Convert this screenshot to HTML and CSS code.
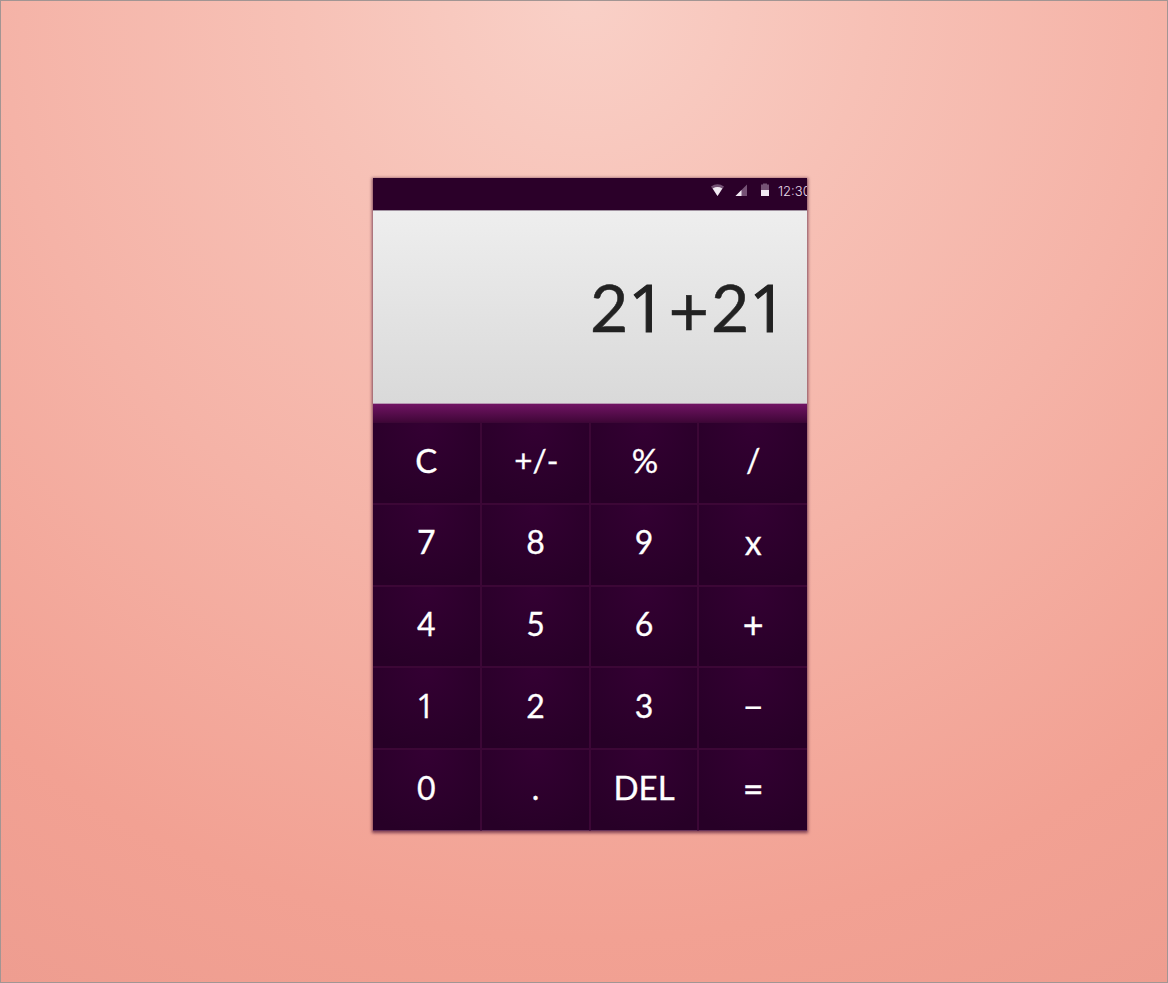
FILE: index.html
```html
<!DOCTYPE html>
<html lang="en">
<head>
<meta charset="utf-8">
<title>Calculator</title>
<link rel="stylesheet" href="styles.css">
</head>
<body>
<main class="calculator">
  <header class="status">
    <svg class="status-icons" width="62" height="16" viewBox="0 0 62 16">
      <path class="dim" d="M0 3.500Q6.500-1 13 3.500L6.500 13Z"/>
      <path class="lit" d="M1.700 5.500Q6.500 2.700 11.300 5.500L6.500 13Z"/>
      <path class="dim" d="M36 1.500V13H24.500Z"/>
      <path class="lit" d="M30.500 7V13H24.500Z"/>
      <path class="dim" d="M52 .500H56V1.500H58V7H50V1.500H52Z"/>
      <path class="lit" d="M50 7H58V13H50Z"/>
    </svg>
    <span class="clock">12:30</span>
  </header>
  <section class="display"><span class="expression">2<span class="one">1</span><span class="plus">+</span>2<span class="one">1</span></span></section>
  <div class="band"></div>
  <section class="keypad">
    <button class="key key-wide">C</button>
    <button class="key key-sign">+/-</button>
    <button class="key key-percent">%</button>
    <button class="key">/</button>
    <button class="key">7</button>
    <button class="key">8</button>
    <button class="key">9</button>
    <button class="key key-times">x</button>
    <button class="key">4</button>
    <button class="key">5</button>
    <button class="key">6</button>
    <button class="key key-op">+</button>
    <button class="key"><span class="one">1</span></button>
    <button class="key">2</button>
    <button class="key">3</button>
    <button class="key key-op key-minus">−</button>
    <button class="key">0</button>
    <button class="key">.</button>
    <button class="key key-del">DEL</button>
    <button class="key key-op">=</button>
  </section>
</main>
</body>
</html>
```
FILE: styles.css
```css
* { box-sizing: border-box; }

body {
  margin: 0;
  width: 1168px;
  height: 983px;
  padding: 177px 0 0 371.5px;
  border: 1px solid #a29593;
  overflow: hidden;
  font-family: Lato, sans-serif;
  background: radial-gradient(circle 1143px at 50% 0, #f9d0c7 0, #f7c1b6 25%, #f5b3a7 51%, #f2a193 82%, #ee9d90 100%);
}

.calculator {
  width: 434.5px;
  height: 653px;
  display: flex;
  flex-direction: column;
  box-shadow: 0 1px 3px 1px rgba(65, 10, 45, .65);
}

.status {
  height: 32px;
  flex: none;
  display: flex;
  padding: 5px 0 0 338.5px;
  background: #2b0029;
  overflow: hidden;
}

.status-icons { flex: none; }
.dim { fill: #755275; }
.lit { fill: #f2e9f3; }

.clock {
  flex: none;
  margin-left: 5px;
  font: 300 13px/17px Inter, sans-serif;
  color: #e9dcea;
}

.display {
  height: 194px;
  flex: none;
  display: flex;
  align-items: center;
  justify-content: flex-end;
  padding: 0 15.5px 1px 0;
  border-top: 1px solid #a193a1;
  border-bottom: 1px solid #b697b2;
  background: linear-gradient(#eeeeee, #d9d9d9);
}

.expression {
  font-size: 66px;
  line-height: 80px;
  letter-spacing: 2px;
  color: #222;
  -webkit-text-stroke: .5px #222;
}

.one { font-family: "Open Sans", sans-serif; }

.expression .one {
  margin: 0 2px 0 -2px;
  letter-spacing: 2.6px;
  line-height: 1;
  -webkit-text-stroke-width: 1.1px;
}

.plus {
  position: relative;
  top: 4px;
  margin: 0 2px 0 -2px;
  font-size: 70px;
  line-height: 1;
  letter-spacing: -.3px;
}

.band {
  height: 18px;
  flex: none;
  background: linear-gradient(#701463, #400638);
}

.keypad {
  flex: 1;
  display: grid;
  grid-template-columns: repeat(4, 1fr);
  grid-template-rows: repeat(5, 1fr);
}

.key {
  margin: 0;
  padding: 0 0 5px;
  border: 1px solid #3c0736;
  font: 32px/40px Lato, sans-serif;
  color: #fff;
  -webkit-text-stroke: .3px #fff;
  background: radial-gradient(ellipse 80px 85px at 50% 0, #340033, #270027);
}

.key:nth-child(4n+1) { border-left: 0; }
.key:nth-child(4n) { border-right: 0; }
.key:nth-last-child(-n+4) { border-bottom-color: #663259; }

.key-wide { font-size: 33px; }
.key-sign { font-size: 31.5px; padding-left: 2px; }
.key-percent { font-size: 33px; padding-left: 2px; }
.key-times { font-size: 34px; }
.key-del { font-size: 33px; padding-bottom: 7px; }
.key-op { font-size: 36px; }
.key-minus { -webkit-text-stroke: 0; }
.key .one { margin-right: 2px; line-height: 1; }
```
